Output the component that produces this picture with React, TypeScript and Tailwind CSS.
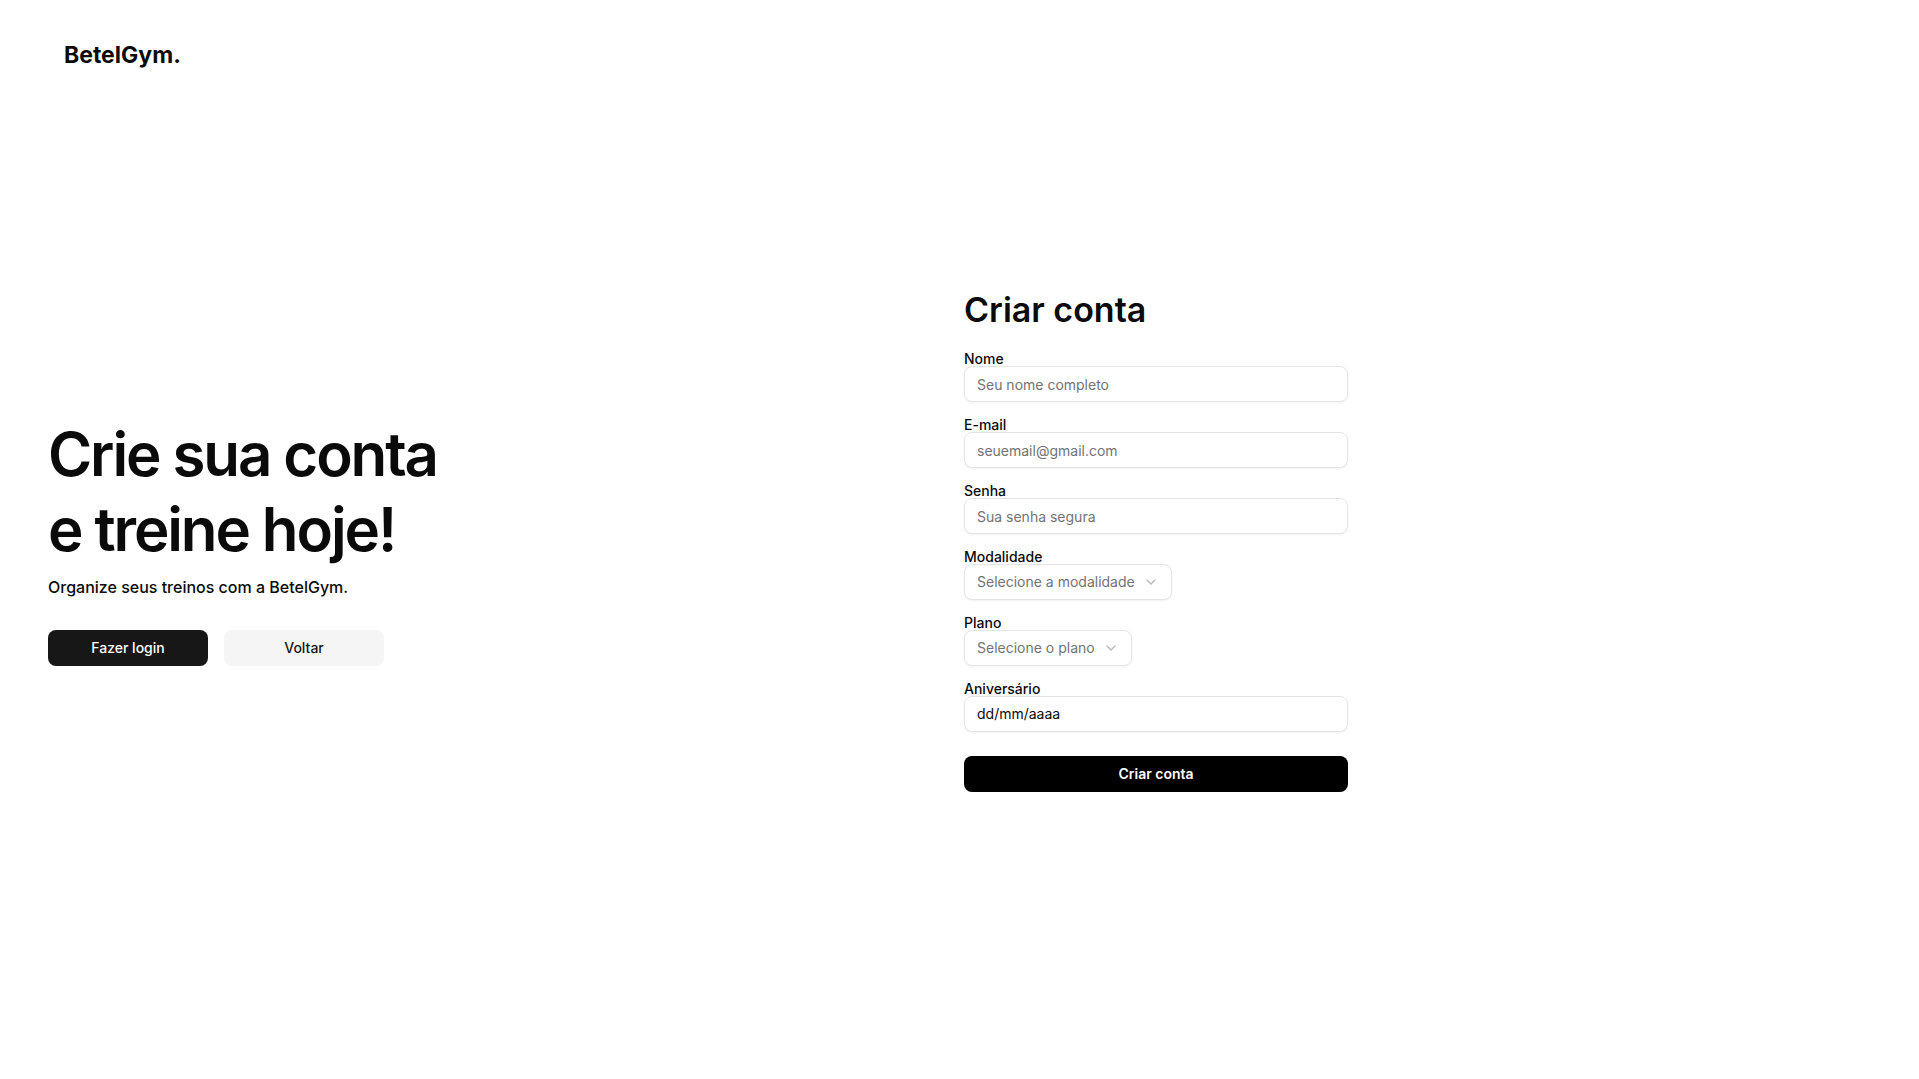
import React from 'react';
import { ChevronDown } from 'lucide-react';

const font = { fontFamily: 'Inter, "Noto Sans", sans-serif' };

const Field: React.FC<{ label: string; children: React.ReactNode }> = ({ label, children }) => (
    <div className="flex flex-col">
        <label className="text-sm font-medium leading-[14px] text-neutral-950">{label}</label>
        {children}
    </div>
);

const TextInput: React.FC<{ placeholder: string; type?: string }> = ({ placeholder, type = 'text' }) => (
    <input
        type={type}
        placeholder={placeholder}
        className="h-9 w-full rounded-lg border border-neutral-200 bg-white px-3 text-sm text-neutral-950 shadow-xs outline-none placeholder:text-neutral-500"
    />
);

const SelectTrigger: React.FC<{ placeholder: string }> = ({ placeholder }) => (
    <button
        type="button"
        className="flex h-9 w-fit items-center justify-between gap-2 rounded-lg border border-neutral-200 bg-white px-3 text-sm text-neutral-500 shadow-xs"
    >
        <span>{placeholder}</span>
        <ChevronDown className="size-4 text-neutral-500 opacity-50" />
    </button>
);

export default function App() {
    return (
        <div className="flex h-screen flex-col bg-white text-neutral-950" style={font}>
            <header className="h-[100px] px-16 pt-[41px]">
                <span className="text-[23px] font-bold leading-[28px]">BetelGym.</span>
            </header>

            <main className="grid flex-1 grid-cols-[916px_384px] items-center pb-[97px] pl-12">
                <div className="flex flex-col">
                    <h1 className="text-[60px] font-semibold leading-[75px] tracking-[-0.035em]">
                        Crie sua conta
                        <br />
                        e treine hoje!
                    </h1>
                    <p className="mt-2 text-base font-medium leading-6">Organize seus treinos com a BetelGym.</p>
                    <div className="mt-[31px] flex gap-4">
                        <button className="h-9 w-40 rounded-lg bg-neutral-900 text-sm font-medium text-white">Fazer login</button>
                        <button className="h-9 w-40 rounded-lg bg-neutral-100 text-sm font-medium text-neutral-900">Voltar</button>
                    </div>
                </div>

                <form className="flex w-96 flex-col gap-4" onSubmit={(e) => e.preventDefault()}>
                    <h2 className="mb-[6px] text-[34px] font-semibold leading-[40px]">Criar conta</h2>
                    <Field label="Nome">
                        <TextInput placeholder="Seu nome completo" />
                    </Field>
                    <Field label="E-mail">
                        <TextInput placeholder="seuemail@gmail.com" type="email" />
                    </Field>
                    <Field label="Senha">
                        <TextInput placeholder="Sua senha segura" type="password" />
                    </Field>
                    <Field label="Modalidade">
                        <SelectTrigger placeholder="Selecione a modalidade" />
                    </Field>
                    <Field label="Plano">
                        <SelectTrigger placeholder="Selecione o plano" />
                    </Field>
                    <Field label="Aniversário">
                        <div className="flex h-9 w-full items-center rounded-lg border border-neutral-200 bg-white px-3 text-sm text-neutral-950 shadow-xs">
                            dd/mm/aaaa
                        </div>
                    </Field>
                    <button type="submit" className="mt-2 h-9 w-full rounded-lg bg-black text-sm font-semibold text-white">
                        Criar conta
                    </button>
                </form>
            </main>
        </div>
    );
}
